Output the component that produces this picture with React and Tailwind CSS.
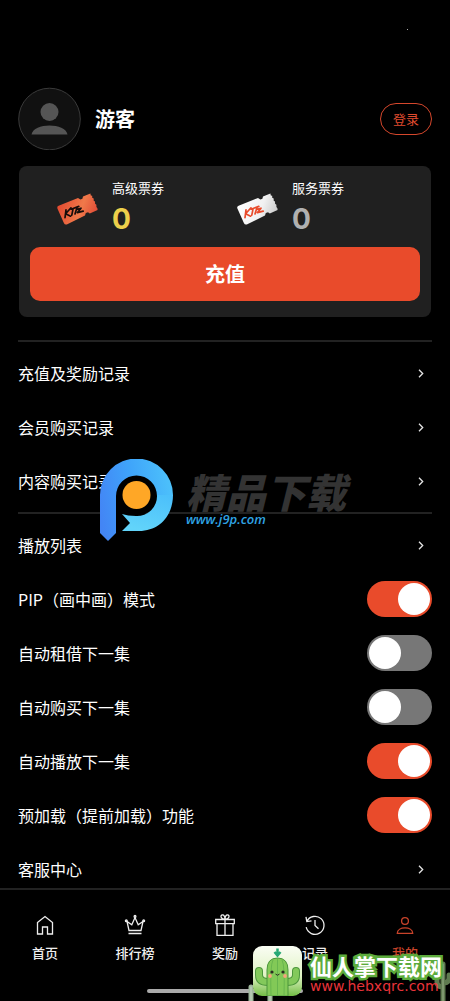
import React, { useState } from 'react';

const Ticket = ({ id, from, mid, to, ink }) => (
  <svg className="h-8 w-[42px] shrink-0" viewBox="0 0 42 32" aria-hidden="true">
    <defs>
      <linearGradient id={id} x1="0" y1="0.3" x2="1" y2="0.6">
        <stop offset="0" stopColor={from} />
        <stop offset="0.6" stopColor={mid} />
        <stop offset="1" stopColor={to} />
      </linearGradient>
    </defs>
    <path
      fill={`url(#${id})`}
      d="M2.6 12.8 22 5l2.4 1.4 2-.6.6-2.400L34.400.4l.4 2 1.400.4v2l1.500.7v2.200l1.300.9.1 2.200 1.300.9v2.300l1 1.300.2 1.700-7.800 3.500-1.800-1.200-2.200.8-.8 2.500L10.800 31.400q-2 .6-2.800-1.200L1.400 15.400q-.8-1.900 1.200-2.600z"
    />
    <g fill="none" stroke={ink} strokeWidth="1.700" strokeLinecap="round" strokeLinejoin="round">
      <path d="M10 16.800 9 24.600M15 14.800l-5.400 6 5 2.400M17 16.200l-1.200 6M15.200 16.200l7.600-2.800M21 14.400 19 21M20.800 16.400l4.200-1.200-3.600 4.400 5.800-1.400" />
    </g>
  </svg>
);

const Chevron = () => (
  <svg className="mr-2 h-[9px] w-[6px]" viewBox="0 0 6 9" fill="none" stroke="#e5e5e5" strokeWidth="1.3" aria-hidden="true">
    <path d="M1 .8 4.7 4.5 1 8.2" />
  </svg>
);

const LinkRow = ({ label }) => (
  <a href="#" className="flex h-[54px] items-center justify-between">
    <span>{label}</span>
    <Chevron />
  </a>
);

const SwitchRow = ({ label, defaultOn }) => {
  const [on, setOn] = useState(defaultOn);

  return (
    <label className="flex h-[54px] items-center justify-between">
      <span>{label}</span>
      <input
        type="checkbox"
        role="switch"
        checked={on}
        onChange={(e) => setOn(e.target.checked)}
        className="flex h-9 w-[65px] cursor-pointer appearance-none items-center rounded-full bg-[#777777] p-[2px] before:block before:size-8 before:rounded-full before:bg-white checked:justify-end checked:bg-[#e94b2b]"
      />
    </label>
  );
};

const icons = {
  home: <path d="M4.500 9.500 12 3.500l7.500 6v11.500h-5v-7h-5v7h-5z" />,
  crown: (
    <>
      <path d="M6 17.500 4 8.500l4.800 3.300L12 4.500l3.200 7.300L20 8.500l-2 9zM5.500 20.500h13" />
      <circle cx="12" cy="3.400" r=".9" />
      <circle cx="3.300" cy="7.700" r=".9" />
      <circle cx="20.700" cy="7.700" r=".9" />
    </>
  ),
  gift: (
    <>
      <path d="M2.700 6.500h18.600v4.200H2.700zM4 10.700h16v11.600H4zM12 6.500v15.800" />
      <path d="M12 6.300C7.500 6.300 7 2 9.400 1.900 11 1.800 12 3.600 12 6.300zM12 6.300c4.500 0 5-4.300 2.600-4.400C13 1.800 12 3.600 12 6.300z" />
    </>
  ),
  history: <path d="M3.800 8.600a9 9 0 1 1-.6 5.600M3 3.800l.8 4.800 4.700-.8M12 7v5.500l3.500 3.300" />,
  user: (
    <>
      <circle cx="12" cy="8" r="3.400" />
      <path d="M4.300 20.300c0-7.200 15.400-7.200 15.400 0z" />
    </>
  ),
};

const tabs = [
  { label: '首页', icon: 'home' },
  { label: '排行榜', icon: 'crown' },
  { label: '奖励', icon: 'gift' },
  { label: '记录', icon: 'history' },
  { label: '我的', icon: 'user', active: true },
];

const BottomNav = () => (
  <nav className="relative -mt-2 border-t-2 border-[#222222] bg-black">
    <div className="grid h-[99px] grid-cols-5">
      {tabs.map((tab) => (
        <a
          key={tab.label}
          href="#"
          aria-current={tab.active ? 'page' : undefined}
          className={`flex flex-col items-center gap-[6px] pt-[23px] text-[13px] leading-5 font-medium ${
            tab.active ? 'text-[#c9432a]' : 'text-[#eeeeee]'
          }`}
        >
          <svg className="size-6" viewBox="0 0 24 24" fill="none" stroke="currentColor" strokeWidth="1.300" aria-hidden="true">
            {icons[tab.icon]}
          </svg>
          {tab.label}
        </a>
      ))}
    </div>
    <div className="mx-auto mb-2 h-1 w-[156px] rounded-full bg-[#aaaaaa]" />
  </nav>
);

const CenterMark = () => (
  <div className="pointer-events-none absolute top-[459px] left-[99px] flex">
    <svg className="h-[82px] w-[75px]" viewBox="0 0 75 82" aria-hidden="true">
      <defs>
        <linearGradient id="pmark" x1="0" y1="0.7" x2="1" y2="0.5">
          <stop offset="0" stopColor="#4385f5" />
          <stop offset="0.5" stopColor="#3fa4fa" />
          <stop offset="1" stopColor="#4cc0fb" />
        </linearGradient>
        <linearGradient id="ptail" x1="0.8" y1="0" x2="0.4" y2="1">
          <stop offset="0" stopColor="#4cc0fb" />
          <stop offset="1" stopColor="#62d4fa" />
        </linearGradient>
      </defs>
      <path fill="#000" d="M16 36a21 21 0 1 1 21 21l-4 0-16 16z" />
      <path fill="url(#pmark)" d="M1 36a36 36 0 0 1 73 0l-16 1a20 20 0 0 0-41 0v37l-8 8-8-8z" />
      <path fill="url(#ptail)" d="M74 36c0 21-14 36-34 36H23l8-8-8-9c4 1 8 2 14 2a20 20 0 0 0 21-21z" />
      <circle cx="37.500" cy="36" r="14" fill="#ffa726" />
    </svg>
    <div className="ml-[12px] pt-[10px] italic">
      <p className="text-[40px] leading-[44px] font-black text-[#333333]">精品下载</p>
      <p className="font-['Open_Sans',sans-serif] text-[13px] leading-3 font-semibold text-[#2fa4e4]">www.j9p.com</p>
    </div>
  </div>
);

const CornerMark = () => (
  <div className="pointer-events-none absolute right-0 bottom-0">
    <svg className="absolute right-0 bottom-0 h-[42px] w-[204px]" viewBox="0 0 204 42" fill="none" strokeLinecap="round" aria-hidden="true">
      <path d="M5 28v14M24 34v8" stroke="#9fb89d" strokeWidth="5" />
      <path d="M5 28v14M24 34v8" stroke="#c7d5c5" strokeWidth="1" />
      <path d="M197 5v37M191 20v3q0 5 6 5M203 16v3q0 5-6 5" stroke="#5f7a50" strokeWidth="5" />
      <path d="M197 5v37" stroke="#9db38c" strokeWidth="1" />
    </svg>
    <div className="relative flex items-start gap-2 pr-2 pb-[5px]">
      <svg className="h-[50px] w-[49px]" viewBox="0 0 49 50" aria-hidden="true">
        <defs>
          <linearGradient id="sand" x1="0" y1="0" x2="0" y2="1">
            <stop offset="0" stopColor="#fafdf4" />
            <stop offset="0.6" stopColor="#e0f3c4" />
            <stop offset="1" stopColor="#72bd45" />
          </linearGradient>
        </defs>
        <rect width="49" height="50" rx="9" fill="url(#sand)" />
        <path d="M24.500 2.500v5M21.500 6l3 3.500 3-3.500" fill="none" stroke="#26a875" strokeWidth="2.500" />
        <path d="M6 25v4q0 7 9 7M43 25v4q0 7-9 7" fill="none" stroke="#4c963c" strokeWidth="8" strokeLinecap="round" />
        <path d="M6 25v4q0 7 9 7M43 25v4q0 7-9 7" fill="none" stroke="#83c95b" strokeWidth="6" strokeLinecap="round" />
        <path d="M14 50V24q0-12 10.500-12T35 24v26z" fill="#82c957" stroke="#4c963c" />
        <path d="M20 14q-3 5-2 36M24.500 12v38M29 14q3 5 2 36" fill="none" stroke="#62b04b" strokeWidth=".8" />
        <circle cx="19" cy="26" r="1.600" fill="#2b2b20" />
        <circle cx="30" cy="26" r="1.600" fill="#2b2b20" />
        <circle cx="17" cy="30" r="1.900" fill="#f6a47c" />
        <circle cx="32" cy="30" r="1.900" fill="#f6a47c" />
        <path d="M22.500 28q2 2.500 4 0" fill="none" stroke="#2b2b20" />
      </svg>
      <div className="pt-[5px] whitespace-nowrap">
        <p className="text-[22px] leading-7 font-bold text-white [paint-order:stroke_fill] [-webkit-text-stroke:5px_#5cab3c]">
          仙人掌下载网
        </p>
        <p className="font-['DejaVu_Sans',sans-serif] text-[14px] leading-[14px] text-[#e8333a]">www.hebxqrc.com</p>
      </div>
    </div>
  </div>
);

const App = () => {
  return (
    <div className="relative min-h-screen overflow-hidden bg-black font-['Noto_Sans_CJK_SC',sans-serif] text-white">
      <span className="absolute top-[29px] right-[42px] size-px bg-[#aaaaaa]" />
      <main className="px-[18px] pt-[87px]">
        <header className="flex items-center">
          <svg className="size-[63px]" viewBox="0 0 63 63" aria-hidden="true">
            <circle cx="31.500" cy="32" r="30.800" fill="#111111" stroke="#3a3a3a" />
            <circle cx="31.500" cy="25" r="9" fill="#555555" />
            <path d="M13.500 47.500c2-12 34-12 36 0z" fill="#555555" />
          </svg>
          <h1 className="ml-[14px] text-xl font-bold">游客</h1>
          <button className="ml-auto h-8 w-[52px] rounded-full border border-[#d5472c] text-[13px] text-[#e14c2f]">
            登录
          </button>
        </header>

        <section className="mx-px mt-4 rounded-lg bg-[#202020] pb-4">
          <div className="flex h-[81px] pt-3 pr-[15px] pl-[37px]">
            <div className="flex flex-1 items-start gap-[14px]">
              <div className="pt-[15px]">
                <Ticket id="ticket-premium" from="#e2472f" mid="#f0794a" to="#e04a36" ink="#160c0a" />
              </div>
              <div>
                <p className="text-[13px] leading-5">高级票券</p>
                <p className="font-[Inter,sans-serif] text-[28px] leading-[42px] font-bold text-[#edcf4b]">0</p>
              </div>
            </div>
            <div className="flex flex-1 items-start gap-[14px]">
              <div className="pt-[15px]">
                <Ticket id="ticket-service" from="#ffffff" mid="#f1f1f1" to="#c9c9c9" ink="#e94b2b" />
              </div>
              <div>
                <p className="text-[13px] leading-5">服务票券</p>
                <p className="font-[Inter,sans-serif] text-[28px] leading-[42px] font-bold text-[#b0b0b0]">0</p>
              </div>
            </div>
          </div>
          <div className="px-[11px]">
            <button className="h-[54px] w-full rounded-[10px] bg-[#e94b2b] text-xl font-bold">充值</button>
          </div>
        </section>

        <div className="mt-[23px] border-t-2 border-[#222222] py-1">
          <LinkRow label="充值及奖励记录" />
          <LinkRow label="会员购买记录" />
          <LinkRow label="内容购买记录" />
        </div>
        <div className="border-t-2 border-[#222222] pt-1">
          <LinkRow label="播放列表" />
          <SwitchRow label="PIP（画中画）模式" defaultOn={true} />
          <SwitchRow label="自动租借下一集" defaultOn={false} />
          <SwitchRow label="自动购买下一集" defaultOn={false} />
          <SwitchRow label="自动播放下一集" defaultOn={true} />
          <SwitchRow label="预加载（提前加载）功能" defaultOn={true} />
          <LinkRow label="客服中心" />
        </div>
      </main>
      <BottomNav />
      <CenterMark />
      <CornerMark />
    </div>
  );
};

export default App;
